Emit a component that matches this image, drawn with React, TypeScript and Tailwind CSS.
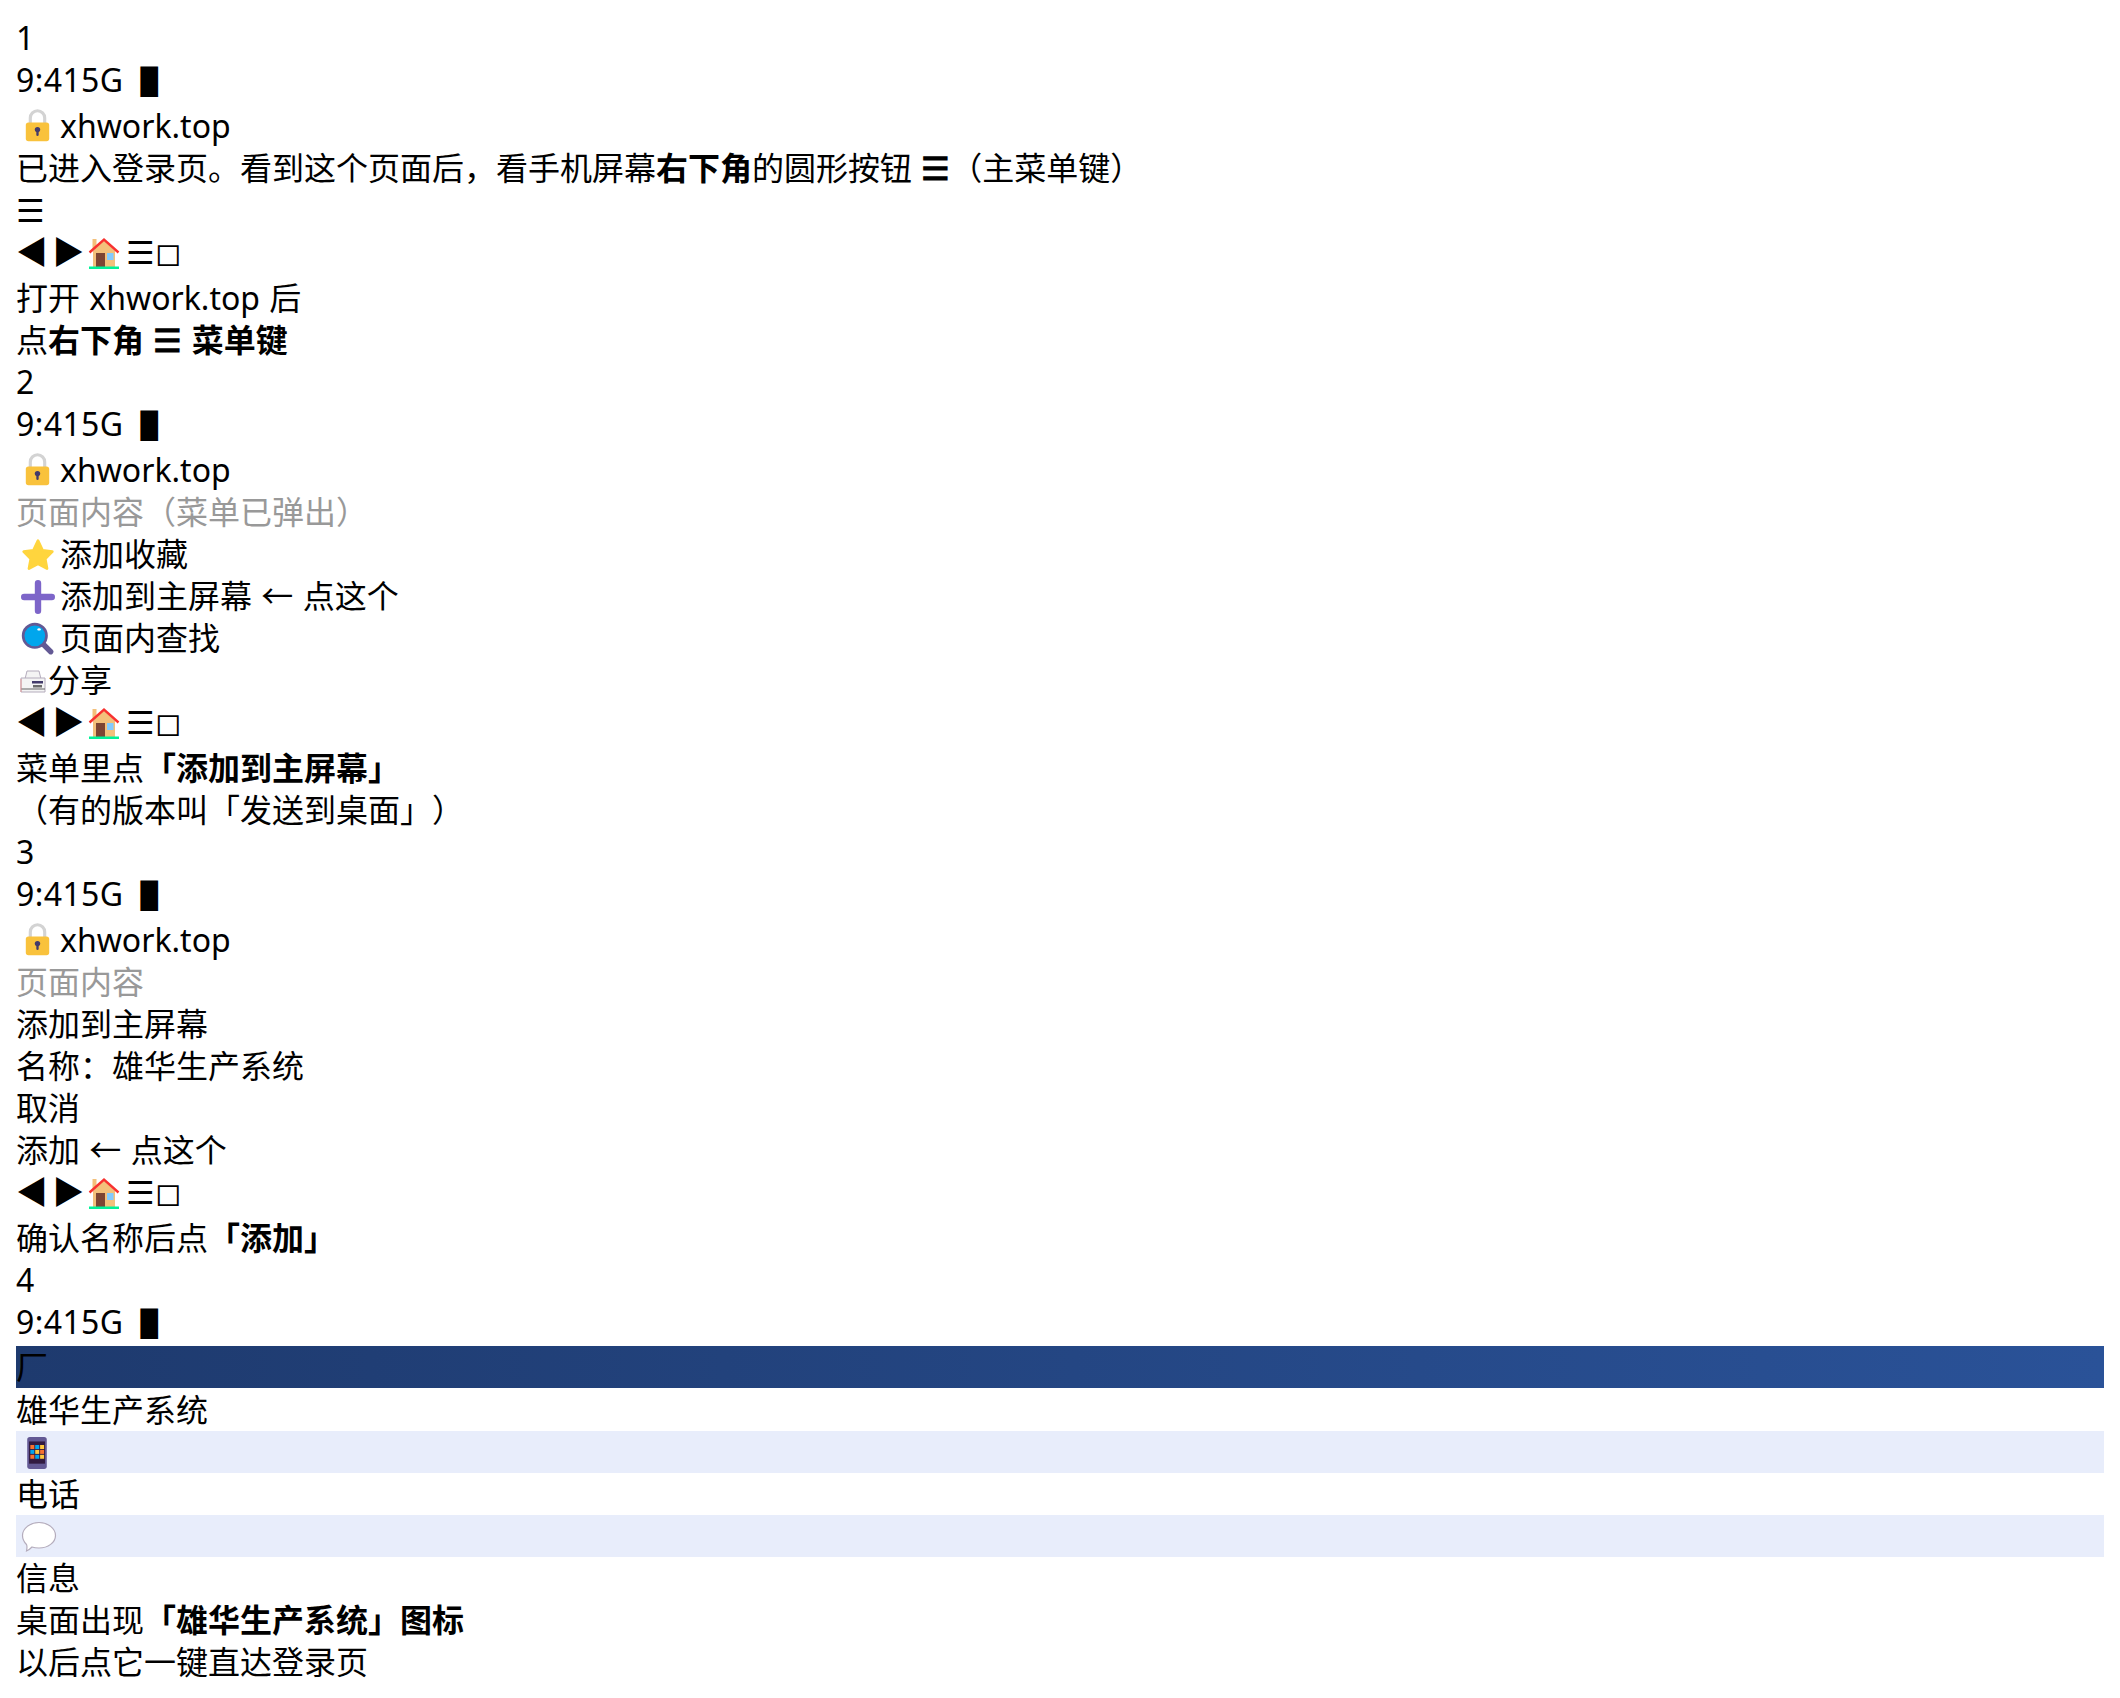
function Lock() {
  return (
    <svg viewBox="0 0 32 40" className="inline-block w-[29px] h-[36px] ml-[7px] mr-[8px] align-[-6px]">
      <path d="M8 18V11a8 8 0 0 1 16 0v7" fill="none" stroke="#d3d3d3" strokeWidth="3.5" />
      <rect x="3" y="16" width="26" height="21" rx="3" fill="#f9c23c" />
      <circle cx="16" cy="24" r="3" fill="#433b6b" />
      <rect x="14.7" y="24" width="2.6" height="7" rx="1.3" fill="#433b6b" />
    </svg>
  );
}
function House() {
  return (
    <svg viewBox="0 0 32 32" className="inline-block w-[32px] h-[32px] align-[-5px]">
      <rect x="4.5" y="2" width="4" height="10" fill="#f3c07b" />
      <path d="M16 3 27 14V30H5V14Z" fill="#f3c07b" />
      <path d="M1.5 15.5 16 2.5l14.500 13" fill="none" stroke="#f8312f" strokeWidth="2.4" />
      <rect x="8" y="16" width="9" height="14" fill="#7d4533" />
      <rect x="19" y="16" width="6.500" height="7" fill="#83cbff" />
      <rect x="1" y="29.500" width="30" height="2.500" fill="#00f397" />
    </svg>
  );
}
function Star() {
  return (
    <svg viewBox="0 0 32 32" className="inline-block w-[34px] h-[34px] ml-[5px] mr-[5px] align-[-6px]">
      <path d="M16 2.500 20.300 11.500 29.500 12.800 22.800 19.500 24.500 28.800 16 24.300 7.500 28.800 9.200 19.500 2.500 12.800 11.700 11.500Z" fill="#ffd53e" stroke="#ffd53e" strokeWidth="2.500" strokeLinejoin="round" />
    </svg>
  );
}
function Plus() {
  return (
    <svg viewBox="0 0 32 32" className="inline-block w-[34px] h-[34px] ml-[5px] mr-[5px] align-[-6px]">
      <path d="M16 3V29M3 16H29" stroke="#7d65c9" strokeWidth="6" strokeLinecap="round" />
    </svg>
  );
}
function Search() {
  return (
    <svg viewBox="0 0 32 32" className="inline-block w-[34px] h-[36px] ml-[5px] mr-[5px] align-[-7px]">
      <path d="M20 20 28 28" stroke="#635994" strokeWidth="5" strokeLinecap="round" />
      <circle cx="13" cy="13" r="11" fill="#00a6ed" stroke="#635994" strokeWidth="2.500" />
      <ellipse cx="17" cy="7" rx="1.600" ry="1.100" fill="#ffffff" />
    </svg>
  );
}
function Fax() {
  return (
    <svg viewBox="0 0 26 26" className="inline-block w-[26px] h-[26px] ml-[4px] mr-[2px] align-[-3px]">
      <path d="M7 2H19L21 10H5Z" fill="#f4f4f4" stroke="#b4acbc" strokeWidth="1" />
      <path d="M1 9H25V23H1Z" fill="#f4f4f4" stroke="#b4acbc" strokeWidth="1" />
      <path d="M1 20H25" stroke="#636363" strokeWidth="1" />
      <rect x="12" y="12" width="11" height="2.500" fill="#433b6b" />
      <rect x="13" y="16" width="9" height="2.500" fill="#6b6b6b" />
      <path d="M1 10V23" stroke="#e19a9a" strokeWidth="1" />
    </svg>
  );
}
function Phone() {
  const colors = ["#f8722f", "#00a6ed", "#ffc83d", "#00a6ed", "#ffc83d", "#f8722f", "#f8722f", "#00a6ed", "#ffc83d"];
  return (
    <svg viewBox="0 0 22 36" className="inline-block w-[22px] h-[32px] ml-[10px] align-[-5px]">
      <rect x="0" y="0" width="22" height="36" rx="3" fill="#635994" />
      <rect x="2" y="5" width="18" height="25" fill="#321b41" />
      {colors.map((c, i) => (
        <rect key={i} x={3.500 + (i % 3) * 5.500} y={9 + Math.floor(i / 3) * 5.500} width="4.500" height="4.500" fill={c} />
      ))}
    </svg>
  );
}
function Bubble() {
  return (
    <svg viewBox="0 0 36 32" className="inline-block w-[36px] h-[32px] ml-[5px] align-[-5px]">
      <path d="M18 1.500C27 1.500 34.500 7.500 34.500 14.500S27 27 18 27C15.500 27 13 26.700 11 26 9 28 7 29.500 5.500 30 6 27.500 6.300 25 5.500 23.500 3 21 1.500 18 1.500 14.500 1.500 7.500 9 1.500 18 1.500Z" fill="#ffffff" stroke="#b4acbc" strokeWidth="1.200" />
    </svg>
  );
}
function Nav() {
  return (
    <div className="pb-[4px]">
      <span className="[word-spacing:-4px]">◀ ▶</span><span className="ml-[4px]"><House /></span><span className="ml-[6px]">☰</span><span>◻</span>
    </div>
  );
}
function Status() {
  return <div className="pb-[4px]"><span className="tracking-[0.4px]">9:415G </span><span className="inline-block scale-x-[1.2] font-['DejaVu_Sans'] text-[40px] leading-[32px] ml-[5px]">▮</span></div>;
}
function Url() {
  return <div><Lock />xhwork.top</div>;
}
export default function App() {
  return (
    <div className="p-4 pt-[17px] text-[32px] leading-[42px] text-black [text-spacing-trim:space-all] [word-spacing:1px] font-['Noto_Sans','Noto_Sans_CJK_SC',sans-serif]">
      <div>1</div><Status /><Url />
      <div>已进入登录页。看到这个页面后，看手机屏幕<b>右下角</b>的圆形按钮 <b>☰</b>（主菜单键）</div>
      <div>☰</div><Nav />
      <div>打开 xhwork.top 后</div>
      <div>点<b>右下角 ☰ 菜单键</b></div>
      <div>2</div><Status /><Url />
      <div className="text-[#999]">页面内容（菜单已弹出）</div>
      <div><Star />添加收藏</div>
      <div><Plus />添加到主屏幕 ← 点这个</div>
      <div><Search />页面内查找</div>
      <div><Fax />分享</div>
      <Nav />
      <div>菜单里点<b>「添加到主屏幕」</b></div>
      <div>（有的版本叫「发送到桌面」）</div>
      <div>3</div><Status /><Url />
      <div className="text-[#999]">页面内容</div>
      <div>添加到主屏幕</div><div>名称：雄华生产系统</div><div>取消</div><div>添加 ← 点这个</div><Nav />
      <div>确认名称后点<b>「添加」</b></div>
      <div>4</div><Status />
      <div className="-mt-px mb-px bg-gradient-to-r from-[#1e3a6e] to-[#2a5298]">厂</div>
      <div>雄华生产系统</div>
      <div className="bg-[#e8edfb]"><Phone /></div><div>电话</div>
      <div className="bg-[#e8edfb]"><Bubble /></div><div>信息</div>
      <div>桌面出现<b>「雄华生产系统」图标</b></div>
      <div>以后点它一键直达登录页</div>
    </div>
  );
}
